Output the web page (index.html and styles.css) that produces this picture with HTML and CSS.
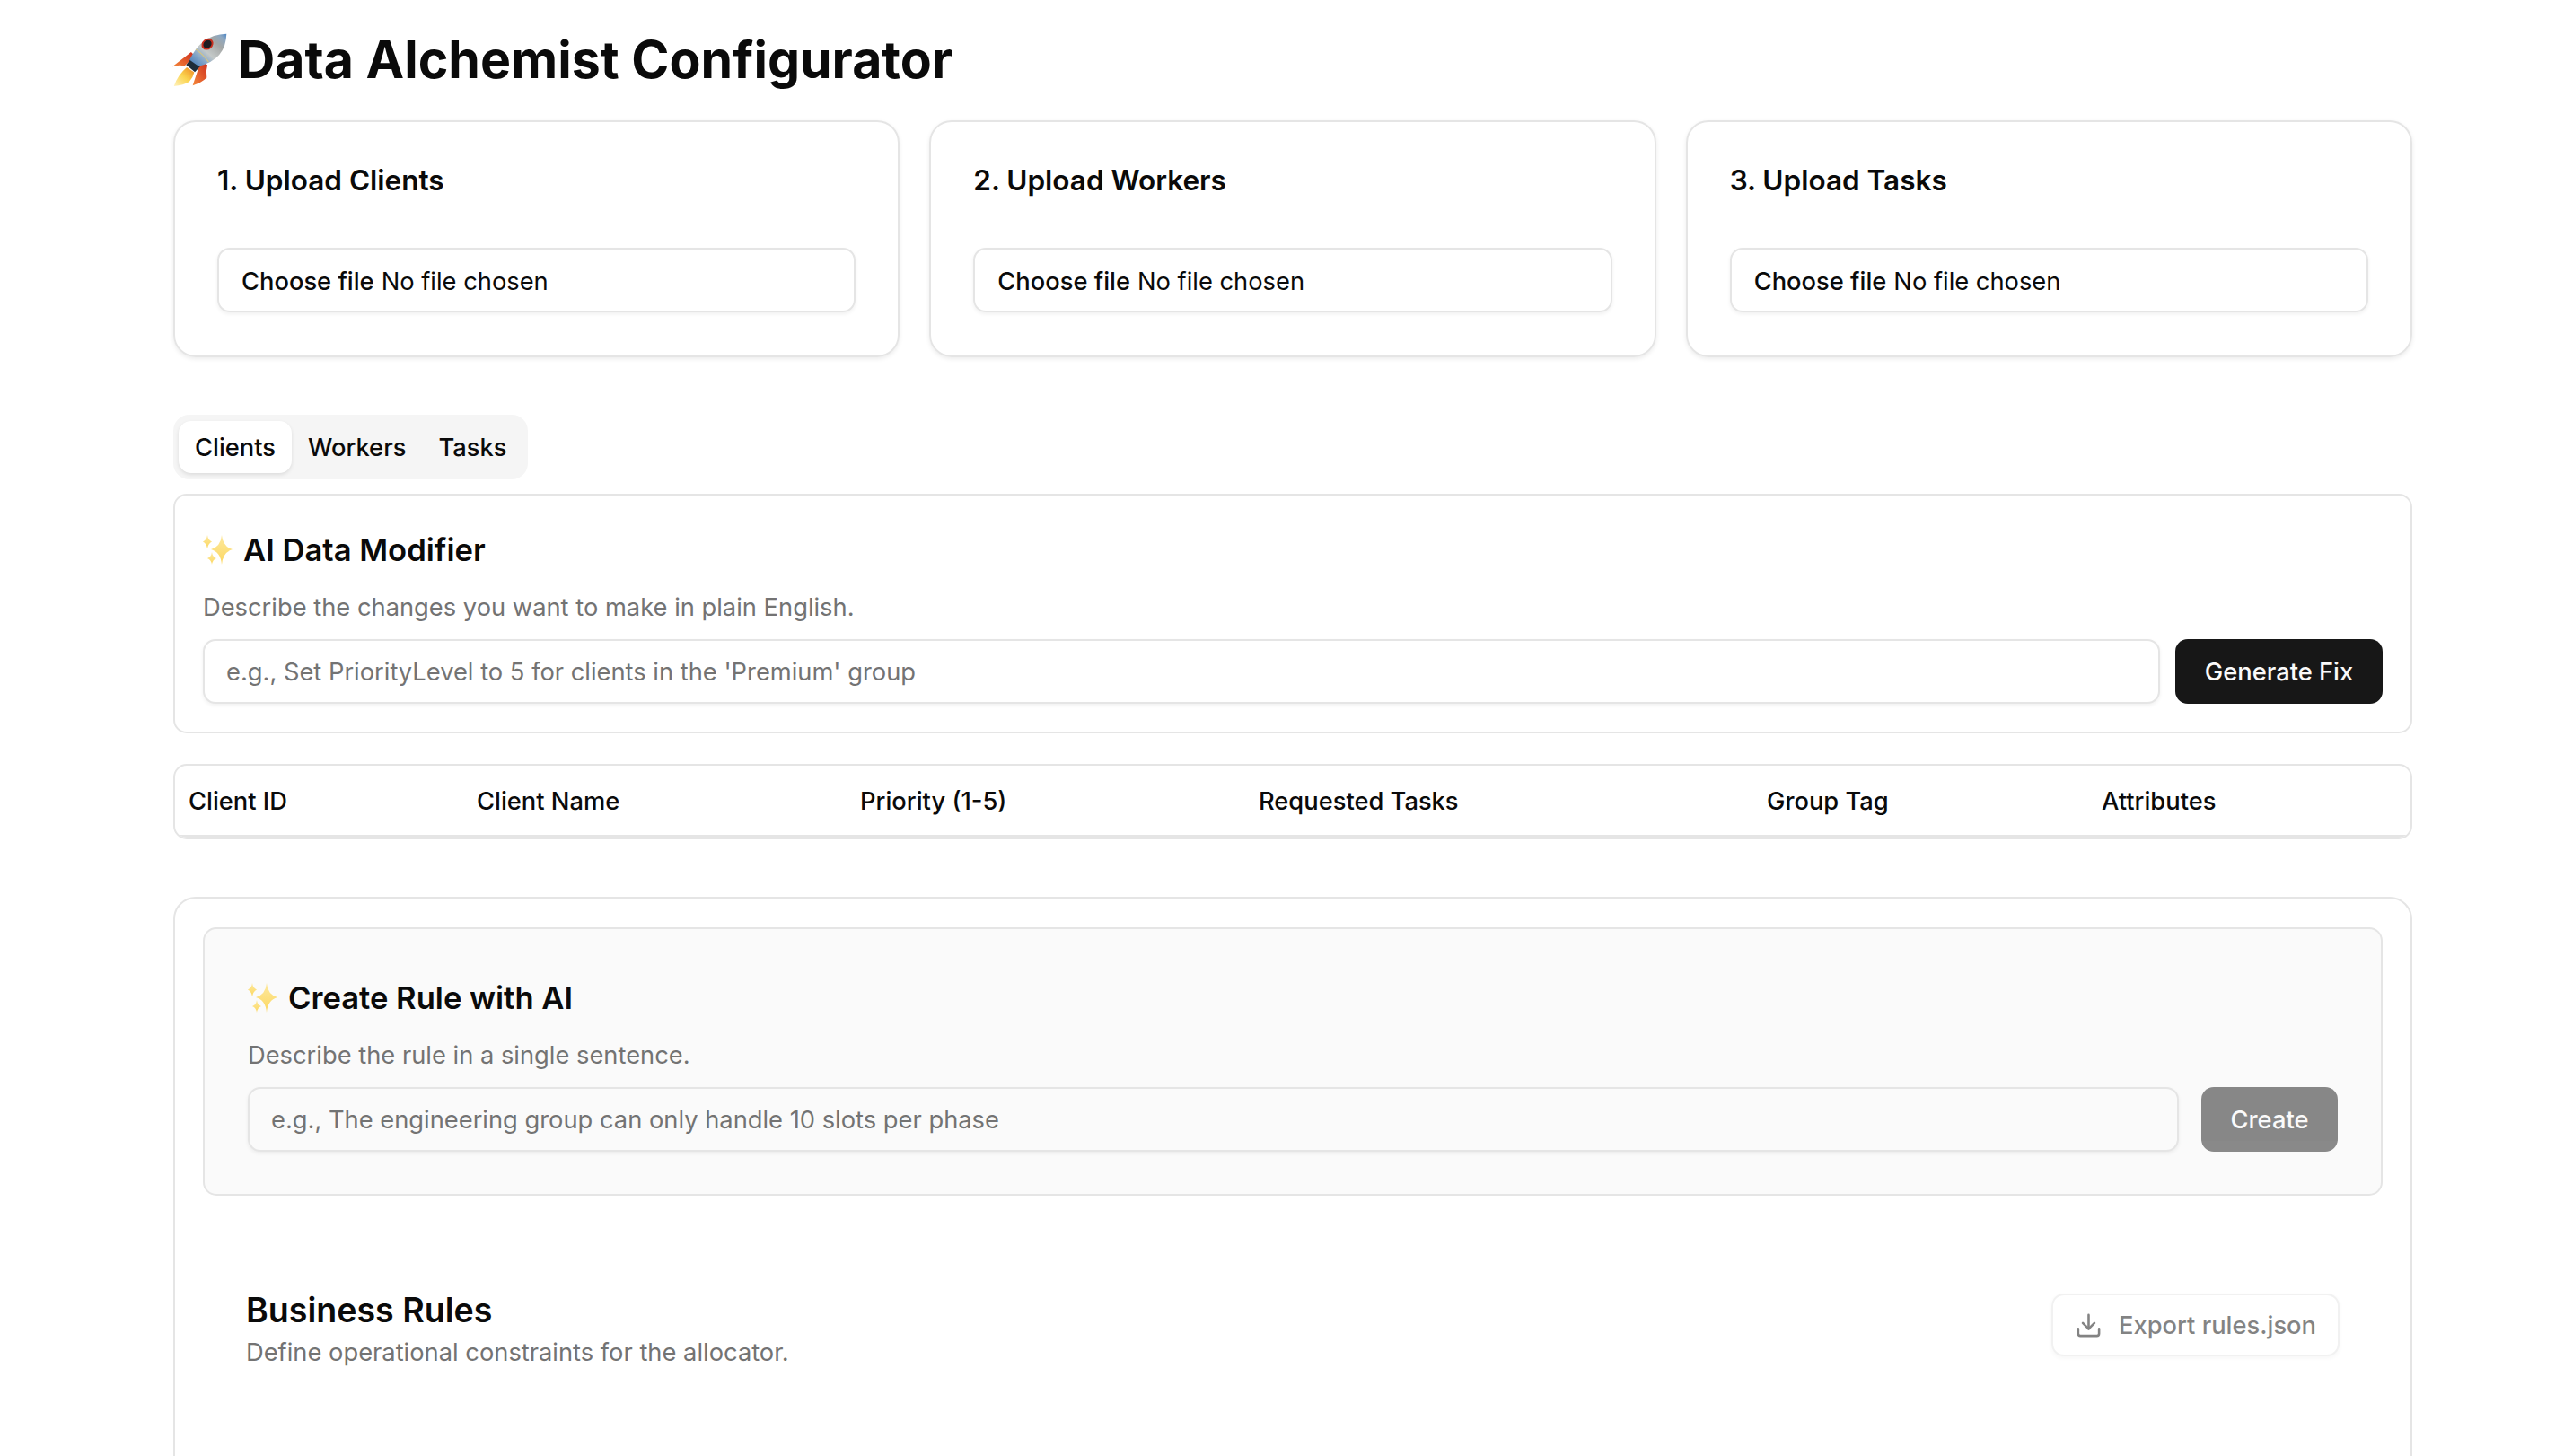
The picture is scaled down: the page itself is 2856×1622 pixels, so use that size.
FILE: index.html
```html
<!DOCTYPE html>
<html lang="en">
<head>
<meta charset="utf-8">
<title>Data Alchemist Configurator</title>
<link rel="stylesheet" href="styles.css">
</head>
<body>
<svg class="defs" width="0" height="0" aria-hidden="true">
  <defs>
    <linearGradient id="star" x1="0" y1="0" x2="0" y2="1">
      <stop offset="0" stop-color="#fde9a0"/><stop offset="1" stop-color="#fcd75f"/>
    </linearGradient>
    <symbol id="sparkles" viewBox="0 0 33 33">
      <path fill="url(#star)" d="M21 0Q22.2 13 33 16Q22.2 19 21 33Q19.8 19 9 16Q19.8 13 21 0Z"/>
      <path fill="url(#star)" d="M5 0Q5.8 5.5 10 7.5Q5.8 9.5 5 15Q4.2 9.5 0 7.5Q4.2 5.5 5 0Z"/>
      <path fill="url(#star)" d="M10 19Q10.8 24.5 15 26Q10.8 27.5 10 33Q9.2 27.5 5 26Q9.2 24.5 10 19Z"/>
    </symbol>
  </defs>
</svg>
<main class="page">
  <h1 class="page-title">
    <svg class="rocket" viewBox="0 0 175 175" aria-hidden="true">
      <defs>
        <linearGradient id="body" x1="0" y1="1" x2="1" y2="0">
          <stop offset="0" stop-color="#3e74b5"/><stop offset="0.25" stop-color="#7fa3c8"/><stop offset="0.45" stop-color="#c4c9c8"/><stop offset="0.72" stop-color="#a3a6a5"/><stop offset="0.88" stop-color="#8fa8c0"/><stop offset="1" stop-color="#4c86c6"/>
        </linearGradient>
        <linearGradient id="fin" x1="1" y1="0" x2="0" y2="1">
          <stop offset="0" stop-color="#cc2a1c"/><stop offset="1" stop-color="#f5883a"/>
        </linearGradient>
        <linearGradient id="flame" x1="1" y1="0" x2="0" y2="1">
          <stop offset="0" stop-color="#ee8420"/><stop offset="0.5" stop-color="#fbd44f"/><stop offset="1" stop-color="#fff2bf"/>
        </linearGradient>
      </defs>
      <path fill="url(#fin)" d="M60 63L0 110Q22 102 38 108L72 75Z"/>
      <path fill="url(#fin)" d="M92 88L65 170Q92 162 110 145Q106 125 112 105Z"/>
      <path fill="url(#flame)" d="M46 112Q18 135 5 172Q36 170 54 158Q66 145 70 128Z"/>
      <path fill="#1f2c3a" d="M44 104L72 127L88 110L58 86Z"/>
      <path fill="url(#body)" d="M173 5Q130 6 98 30Q72 52 55 88L84 108Q125 100 150 72Q172 45 173 5Z"/>
      <path fill="none" stroke="#d9c77e" stroke-width="3" d="M75 54Q98 70 116 95"/>
      <ellipse cx="112" cy="38" rx="20" ry="17" fill="#c9301f" transform="rotate(-40 112 38)"/>
      <ellipse cx="112" cy="38" rx="14" ry="12" fill="#1d1d22" transform="rotate(-40 112 38)"/>
    </svg>
    <span>Data Alchemist Configurator</span>
  </h1>

  <section class="uploads">
    <div class="upload-card">
      <h2 class="upload-title">1. Upload Clients</h2>
      <div class="file-field"><span class="file-btn">Choose file</span> <span>No file chosen</span></div>
    </div>
    <div class="upload-card">
      <h2 class="upload-title">2. Upload Workers</h2>
      <div class="file-field"><span class="file-btn">Choose file</span> <span>No file chosen</span></div>
    </div>
    <div class="upload-card">
      <h2 class="upload-title">3. Upload Tasks</h2>
      <div class="file-field"><span class="file-btn">Choose file</span> <span>No file chosen</span></div>
    </div>
  </section>

  <nav class="tabs">
    <button class="tab tab-active">Clients</button>
    <button class="tab">Workers</button>
    <button class="tab">Tasks</button>
  </nav>

  <section class="panel">
    <h3 class="ai-title"><svg class="sparkles" aria-hidden="true"><use href="#sparkles"/></svg><span>AI Data Modifier</span></h3>
    <p class="muted ai-desc">Describe the changes you want to make in plain English.</p>
    <div class="ai-row">
      <input class="text-input" type="text" placeholder="e.g., Set PriorityLevel to 5 for clients in the 'Premium' group">
      <button class="btn btn-primary btn-fix">Generate Fix</button>
    </div>
  </section>

  <section class="data-table">
    <div class="table-head">
      <span>Client ID</span><span>Client Name</span><span>Priority (1-5)</span><span>Requested Tasks</span><span>Group Tag</span><span>Attributes</span>
    </div>
  </section>

  <section class="rules-card">
    <div class="rule-ai">
      <h3 class="ai-title"><svg class="sparkles" aria-hidden="true"><use href="#sparkles"/></svg><span>Create Rule with AI</span></h3>
      <p class="muted ai-desc">Describe the rule in a single sentence.</p>
      <div class="ai-row ai-row-wide">
        <input class="text-input text-input-tint" type="text" placeholder="e.g., The engineering group can only handle 10 slots per phase">
        <button class="btn btn-primary btn-create">Create</button>
      </div>
    </div>
    <div class="rules-head">
      <div>
        <h2 class="rules-title">Business Rules</h2>
        <p class="muted rules-desc">Define operational constraints for the allocator.</p>
      </div>
      <button class="btn btn-export">
        <svg class="dl-icon" viewBox="0 0 24 24" fill="none" stroke="currentColor" stroke-width="2" stroke-linecap="round" stroke-linejoin="round" aria-hidden="true">
          <path d="M21 15v4a2 2 0 0 1-2 2H5a2 2 0 0 1-2-2v-4"/><polyline points="7 10 12 15 17 10"/><line x1="12" y1="15" x2="12" y2="3"/>
        </svg>
        <span>Export rules.json</span>
      </button>
    </div>
  </section>
</main>
</body>
</html>
```
FILE: styles.css
```css
* { box-sizing: border-box; }
html, body { margin: 0; height: 1622px; overflow: hidden; background: #fff; }
body { font-family: Inter, "Liberation Sans", sans-serif; color: #0a0a0a; font-size: 27.3px; }
.defs { position: absolute; }
.page { width: 2494px; margin-left: 193px; padding-top: 33px; }
.page-title { display: flex; align-items: center; gap: 12px; margin: 0 0 0 -1px; height: 67px; font-size: 57.2px; font-weight: 700; line-height: 67px; }
.rocket { width: 61px; height: 61px; flex: none; }

.uploads { display: flex; gap: 33px; margin-top: 34px; }
.upload-card { flex: 1; height: 264px; padding: 49px 47px 47px; border: 2px solid #e5e5e5; border-radius: 25px; box-shadow: 0 2px 5px rgba(0,0,0,.08); }
.upload-title { margin: 0 0 59px; font-size: 31.5px; line-height: 32px; font-weight: 600; }
.file-field { display: flex; align-items: center; gap: 8px; height: 72px; padding: 3px 25px 0; border: 2px solid #e5e5e5; border-radius: 14px; box-shadow: 0 2px 4px rgba(0,0,0,.06); line-height: 1; }
.file-btn { font-weight: 500; }

.tabs { display: inline-flex; align-items: stretch; height: 72px; margin-top: 64px; padding: 7px 6px; background: #f5f5f5; border-radius: 18px; vertical-align: top; }
.tab { padding: 0 18px; border: 0; background: none; border-radius: 14px; font: 500 27.3px Inter, sans-serif; color: #0a0a0a; }
.tab-active { background: #fff; box-shadow: 0 2px 4px rgba(0,0,0,.1); }

.panel { height: 267px; margin-top: 16px; padding: 32px 31px; border: 2px solid #e5e5e5; border-radius: 15px; }
.ai-title { display: flex; align-items: center; gap: 12px; margin: 0; height: 56px; font-size: 34.6px; line-height: 56px; font-weight: 600; }
.sparkles { width: 33px; height: 33px; flex: none; }
.muted { color: #737373; }
.ai-desc { margin: 19px 0 0; line-height: 36px; }
.ai-row { display: flex; gap: 17px; margin-top: 17px; height: 72px; }
.ai-row-wide { gap: 25px; }
.text-input { flex: 1; min-width: 0; padding: 0 24px; border: 2px solid #e5e5e5; border-radius: 14px; background: #fff; box-shadow: 0 2px 4px rgba(0,0,0,.06); font: 400 27.3px Inter, sans-serif; color: #0a0a0a; outline: 0; }
.text-input::placeholder { color: #737373; opacity: 1; }
.text-input-tint { background: #fafafa; }
.btn { font: 500 27.3px Inter, sans-serif; border-radius: 14px; }
.btn-primary { border: 0; background: #171717; color: #fafafa; }
.btn-fix { width: 231px; }
.btn-create { width: 152px; opacity: .5; }

.data-table { height: 84px; margin-top: 34px; border: 2px solid #e5e5e5; border-radius: 15px; overflow: hidden; }
.table-head { display: grid; grid-template-columns: 321px 427px 444px 566px 373px 1fr; align-items: center; height: 80px; padding: 1px 0 0 15px; border-bottom: 3px solid #e5e5e5; font-weight: 500; }

.rules-card { height: 800px; margin-top: 64px; padding: 32px 31px; border: 2px solid #e5e5e5; border-radius: 25px; }
.rule-ai { height: 299px; padding: 48px; border: 2px solid #e5e5e5; border-radius: 15px; background: #fafafa; }
.rules-head { display: flex; justify-content: space-between; align-items: flex-start; margin-top: 107px; padding: 0 48px; }
.rules-title { margin: 0; font-size: 37.6px; line-height: 42px; font-weight: 600; }
.rules-desc { margin: 8px 0 0; line-height: 36px; }
.btn-export { display: flex; align-items: center; gap: 18px; height: 70px; margin-top: 2px; padding: 0 24px; border: 2px solid #e5e5e5; background: #fff; color: #0a0a0a; opacity: .5; box-shadow: 0 2px 4px rgba(0,0,0,.06); }
.dl-icon { width: 31px; height: 31px; flex: none; }
```
